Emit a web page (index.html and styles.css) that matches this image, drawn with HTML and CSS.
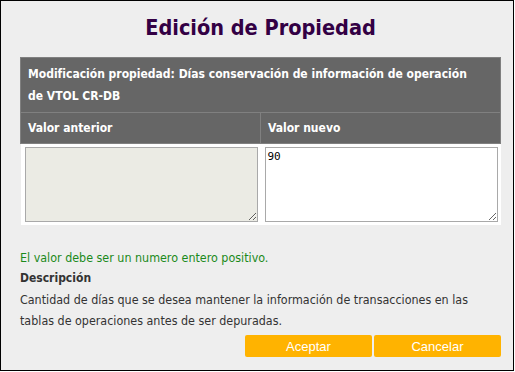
FILE: index.html
```html
<!DOCTYPE html>
<html lang="es">
<head>
<meta charset="utf-8">
<title>Edición de Propiedad</title>
<link rel="stylesheet" href="styles.css">
</head>
<body>
<div class="dialog">
  <h1 class="title">Edición de Propiedad</h1>
  <table class="prop-table">
    <tr>
      <th colspan="2" class="head-main">Modificación propiedad: Días conservación de información de operación de VTOL CR-DB</th>
    </tr>
    <tr>
      <th class="head-col">Valor anterior</th>
      <th class="head-col">Valor nuevo</th>
    </tr>
    <tr class="values">
      <td><textarea class="ta ta-old" disabled></textarea></td>
      <td><textarea class="ta ta-new">90</textarea></td>
    </tr>
  </table>
  <div class="info">
    <p class="msg">El valor debe ser un numero entero positivo.</p>
    <p class="desc-title">Descripción</p>
    <p class="desc">Cantidad de días que se desea mantener la información de transacciones en las tablas de operaciones antes de ser depuradas.</p>
  </div>
  <div class="actions">
    <button class="btn">Aceptar</button>
    <button class="btn">Cancelar</button>
  </div>
</div>
</body>
</html>
```
FILE: styles.css
```css
html, body {
  margin: 0;
  padding: 0;
  background: #ffffff;
}
.dialog {
  box-sizing: border-box;
  width: 514px;
  height: 371px;
  border: 1px solid #000;
  background: #eeeeee;
  font-family: "DejaVu Sans Condensed", "DejaVu Sans", sans-serif;
  font-size: 12.4px;
  color: #333;
  padding: 0 12px 0 19px;
}
.title {
  margin: 0;
  padding-top: 14px;
  height: 56px;
  box-sizing: border-box;
  text-align: center;
  font-size: 21.5px;
  line-height: 26px;
  font-weight: bold;
  color: #330044;
}
.prop-table {
  width: 481px;
  border-collapse: collapse;
  table-layout: fixed;
  font-size: 12px;
}
.prop-table th {
  background: #666666;
  color: #fff;
  text-align: left;
  font-weight: bold;
  border: 1px solid #808080;
  line-height: 22px;
  padding: 4px 7px;
}
.prop-table th.head-main {
  padding: 5px 16px 5px 7px;
}
.values td {
  background: #fff;
  padding: 3px 4px;
  border: 0;
  vertical-align: top;
}
.ta {
  display: block;
  box-sizing: border-box;
  width: 233px;
  height: 75px;
  margin: 0;
  border: 1px solid #a9a9a9;
  padding: 2px;
  font-family: "DejaVu Sans Mono", monospace;
  font-size: 11px;
  color: #000;
  resize: both;
}
.ta-old {
  background: #ebebe4;
}
.ta-new {
  background: #fff;
}
.info {
  margin-top: 23px;
}
.info p {
  margin: 0;
  line-height: 21px;
}
.msg {
  color: #1b8a1b;
  line-height: 20px !important;
}
.desc-title {
  font-weight: bold;
  font-size: 12px;
}
.actions {
  display: flex;
  justify-content: flex-end;
  gap: 2px;
  width: 481px;
  margin-top: 4px;
}
.btn {
  width: 127px;
  height: 22px;
  border: 0;
  border-radius: 2px;
  background: #ffb300;
  color: #fff;
  font-family: "Liberation Sans", Arial, sans-serif;
  font-size: 13px;
  padding: 0;
}
```
